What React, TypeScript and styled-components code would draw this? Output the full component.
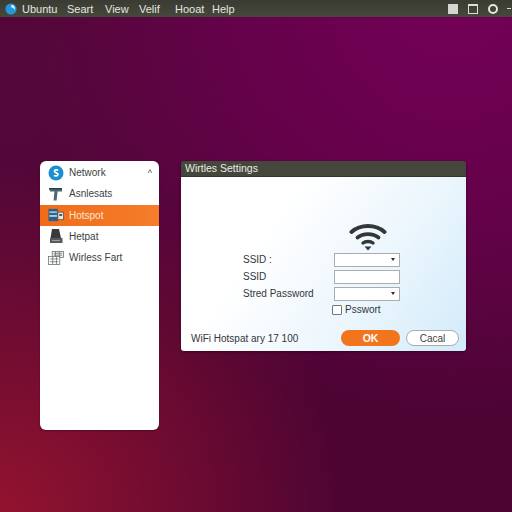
import React from 'react';
import styled, {createGlobalStyle} from 'styled-components';

const GlobalStyle = createGlobalStyle`
  html, body {
    margin: 0;
    padding: 0;
    width: 512px;
    height: 512px;
    overflow: hidden;
    font-family: "Liberation Sans", Arial, sans-serif;
  }
`;

const menuItems = [
    {label: 'Ubuntu', width: 45},
    {label: 'Seart', width: 38},
    {label: 'View', width: 34},
    {label: 'Velif', width: 36},
    {label: 'Hooat', width: 37},
    {label: 'Help', width: 30},
];

const UbuntuLogo = () => (
    <svg width="12" height="12" viewBox="0 0 12 12">
        <circle cx="6" cy="6" r="5.6" fill="#2396dc"/>
        <path d="M7 1.8C9.4 2.6 10.4 4.6 9.8 7 9 5.4 7.8 4.4 5.8 4.2z" fill="#e8f6fc"/>
    </svg>
);

const NetworkIcon = () => (
    <svg width="16" height="16" viewBox="0 0 16 16">
        <circle cx="8" cy="8" r="7.5" fill="#1b8fd0"/>
        <path d="M10.2 5.4C9.2 4.5 6.4 4.6 6.4 6.3c0 1.9 3.6 1.3 3.6 3.2 0 1.7-2.9 1.8-4 .9" fill="none" stroke="#fff" strokeWidth="1.7"/>
    </svg>
);

const AssetsIcon = () => (
    <svg width="16" height="16" viewBox="0 0 16 16">
        <path d="M1 2h13v3.5H9.6L8.6 14.5H5.6L6.4 5.5H2z" fill="#4f6673"/>
        <path d="M1 2h13v1.4H1z" fill="#2b3d49"/>
    </svg>
);

const HotspotIcon = () => (
    <svg width="17" height="14" viewBox="0 0 17 14">
        <rect x="0.5" y="0.5" width="10" height="13" fill="#2f5f86"/>
        <rect x="1.5" y="3" width="8" height="2" fill="#8fc0dc"/>
        <rect x="1.5" y="7" width="8" height="2" fill="#a9d0e4"/>
        <rect x="10.5" y="4" width="6" height="8" fill="#f3e3d3" stroke="#47515a" strokeWidth="0.8"/>
        <rect x="12" y="6" width="3" height="2" fill="#47515a"/>
    </svg>
);

const DriveIcon = () => (
    <svg width="15" height="16" viewBox="0 0 15 16">
        <path d="M3 1h7l2 9H1.5z" fill="#3a3a3a"/>
        <rect x="1" y="10" width="12.5" height="5" fill="#555a5c"/>
        <rect x="3" y="12" width="8" height="1" fill="#9a9fa1"/>
    </svg>
);

const WirelessIcon = () => (
    <svg width="17" height="16" viewBox="0 0 17 16" fill="none" stroke="#666b6e" strokeWidth="0.8">
        <rect x="4.5" y="1" width="12" height="6.5" fill="#f2f2f2"/>
        <path d="M6 3h9M6 5h9M8 1v6.5M12 1v6.5"/>
        <rect x="0.5" y="6.5" width="12" height="8.5" fill="#fff"/>
        <path d="M2 9h9M2 12h9M5 6.5V15M9 6.5V15"/>
    </svg>
);

const WifiIcon = () => (
    <svg width="38" height="28" viewBox="0 0 38 28" fill="none" stroke="#33373a" strokeLinecap="round">
        <path d="M2.5 9C11.5 1 26.5 1 35.5 9" strokeWidth="4"/>
        <path d="M8.5 14.5C14 10 24 10 29.5 14.5" strokeWidth="3.8"/>
        <path d="M14 20C16.5 18 21.5 18 24 20" strokeWidth="3.4"/>
        <path d="M15.5 23.5h7L19 27.6z" fill="#33373a" stroke="none"/>
    </svg>
);

const navItems = [
    {label: 'Network', icon: <NetworkIcon/>, chevron: true},
    {label: 'Asnlesats', icon: <AssetsIcon/>},
    {label: 'Hotspot', icon: <HotspotIcon/>, active: true},
    {label: 'Hetpat', icon: <DriveIcon/>},
    {label: 'Wirless Fart', icon: <WirelessIcon/>},
];

export default function App() {
    return (
        <Desktop>
            <GlobalStyle/>
            <TopBar>
                <UbuntuLogo/>
                <Menu>
                    {menuItems.map(item => (
                        <MenuItem key={item.label} $width={item.width}>{item.label}</MenuItem>
                    ))}
                </Menu>
                <Tray>
                    <TraySquare/>
                    <TrayWindow/>
                    <TrayCircle/>
                    <TrayDash/>
                </Tray>
            </TopBar>
            <Workspace>
                <Sidebar>
                    {navItems.map(item => (
                        <NavRow key={item.label} $active={item.active}>
                            <NavIcon>{item.icon}</NavIcon>
                            <span>{item.label}</span>
                            {item.chevron && <Chevron>^</Chevron>}
                        </NavRow>
                    ))}
                </Sidebar>
                <Dialog>
                    <TitleBar>Wirtles Settings</TitleBar>
                    <DialogBody>
                        <WifiHolder><WifiIcon/></WifiHolder>
                        <Form>
                            <FieldLabel>SSID :</FieldLabel>
                            <Select/>
                            <FieldLabel>SSID</FieldLabel>
                            <TextInput/>
                            <FieldLabel>Stred Password</FieldLabel>
                            <Select/>
                            <span/>
                            <CheckRow>
                                <CheckBox/>
                                <span>Psswort</span>
                            </CheckRow>
                        </Form>
                        <Footer>
                            <FooterText>WiFi Hotspat ary 17 100</FooterText>
                            <OkButton>OK</OkButton>
                            <CancelButton>Cacal</CancelButton>
                        </Footer>
                    </DialogBody>
                </Dialog>
            </Workspace>
        </Desktop>
    );
}

const Desktop = styled.div`
  width: 512px;
  height: 512px;
  display: flex;
  flex-direction: column;
  background:
    radial-gradient(circle at 0% 100%, #93132f 0%, rgba(147, 19, 47, 0.55) 22%, rgba(147, 19, 47, 0) 48%),
    radial-gradient(circle at 88% 0%, #730057 0%, rgba(115, 0, 87, 0.65) 30%, rgba(115, 0, 87, 0) 62%),
    radial-gradient(circle at 0% 15%, #54083a 0%, rgba(84, 8, 58, 0) 50%),
    #4c0433;
`;

const TopBar = styled.div`
  height: 17px;
  flex: none;
  box-sizing: border-box;
  display: flex;
  align-items: center;
  padding: 0 1px 0 5px;
  background: linear-gradient(#3a3b33, #46483c);
  color: #e6e6e0;
`;

const Menu = styled.div`
  display: flex;
  margin-left: 5px;
  font-size: 11px;
`;

const MenuItem = styled.span<{$width: number}>`
  width: ${p => p.$width}px;
`;

const Tray = styled.div`
  margin-left: auto;
  display: flex;
  align-items: center;
`;

const TraySquare = styled.div`
  width: 10px;
  height: 10px;
  margin-right: 10px;
  background: #d4d4d0;
`;

const TrayWindow = styled.div`
  width: 8px;
  height: 7px;
  margin-right: 10px;
  border: 1px solid #dedfd8;
  border-top-width: 2px;
`;

const TrayCircle = styled.div`
  width: 6px;
  height: 6px;
  margin-right: 9px;
  border: 2px solid #e6e6e0;
  border-radius: 50%;
`;

const TrayDash = styled.div`
  width: 4px;
  height: 1px;
  background: #d8d8d2;
`;

const Workspace = styled.div`
  display: flex;
  align-items: flex-start;
  gap: 22px;
  padding: 144px 0 0 40px;
`;

const Sidebar = styled.div`
  width: 119px;
  height: 269px;
  box-sizing: border-box;
  padding-top: 1px;
  background: #fff;
  border-radius: 6px;
  box-shadow: 0 1px 2px rgba(0, 0, 0, 0.3);
`;

const NavRow = styled.div<{$active?: boolean}>`
  height: 21.25px;
  display: flex;
  align-items: center;
  gap: 5px;
  padding-left: 8px;
  font-size: 10px;
  color: ${p => (p.$active ? '#fbe6d6' : '#3c3f42')};
  background: ${p => (p.$active ? 'linear-gradient(90deg, #ef6c1a, #f57d2b)' : 'transparent')};
`;

const NavIcon = styled.span`
  width: 16px;
  display: flex;
  justify-content: center;
`;

const Chevron = styled.span`
  margin-left: auto;
  margin-right: 7px;
  font-size: 9px;
`;

const Dialog = styled.div`
  width: 285px;
  height: 190px;
  display: flex;
  flex-direction: column;
  border-radius: 3px;
  overflow: hidden;
  box-shadow: 0 1px 3px rgba(0, 0, 0, 0.4);
`;

const TitleBar = styled.div`
  height: 16px;
  flex: none;
  box-sizing: border-box;
  padding-left: 4px;
  font-size: 10.5px;
  line-height: 14px;
  color: #ecece6;
  background: #45473c;
  border-bottom: 1px solid #34362d;
`;

const DialogBody = styled.div`
  flex: 1;
  display: flex;
  flex-direction: column;
  background: linear-gradient(125deg, #ffffff 30%, #eef7fd 62%, #d2ebfa 100%);
`;

const WifiHolder = styled.div`
  height: 28px;
  margin-top: 46px;
  padding-left: 168px;
  flex: none;
`;

const Form = styled.div`
  display: grid;
  grid-template-columns: 91px 66px;
  grid-auto-rows: 17px;
  align-items: center;
  padding-left: 62px;
`;

const FieldLabel = styled.span`
  font-size: 10px;
  color: #33363a;
`;

const TextInput = styled.div`
  height: 14px;
  box-sizing: border-box;
  border: 1px solid #a9adaf;
  background: #fff;
`;

const Select = styled(TextInput)`
  position: relative;

  &::after {
    content: '';
    position: absolute;
    right: 4px;
    top: 4px;
    border: 2.5px solid transparent;
    border-top: 3px solid #2c2c2c;
    border-bottom: 0;
  }
`;

const CheckRow = styled.div`
  display: flex;
  align-items: center;
  gap: 3px;
  margin: -2px 0 0 -2px;
  font-size: 10px;
  color: #33363a;
`;

const CheckBox = styled.div`
  width: 8px;
  height: 8px;
  border: 1px solid #70757a;
  border-radius: 1px;
  background: #fff;
`;

const Footer = styled.div`
  display: flex;
  align-items: center;
  margin-top: 11px;
  padding-left: 10px;
`;

const FooterText = styled.span`
  width: 150px;
  font-size: 10px;
  color: #33363a;
`;

const OkButton = styled.button`
  width: 59px;
  height: 16px;
  margin-right: 6px;
  padding: 0;
  border: none;
  border-radius: 8px;
  font: bold 10.5px "Liberation Sans", Arial, sans-serif;
  color: #fff;
  background: #f2751e;
`;

const CancelButton = styled.button`
  width: 53px;
  height: 16px;
  padding: 0;
  border: 1px solid #a8acae;
  border-radius: 8px;
  font: 10px "Liberation Sans", Arial, sans-serif;
  color: #3c3f42;
  background: #fff;
`;
